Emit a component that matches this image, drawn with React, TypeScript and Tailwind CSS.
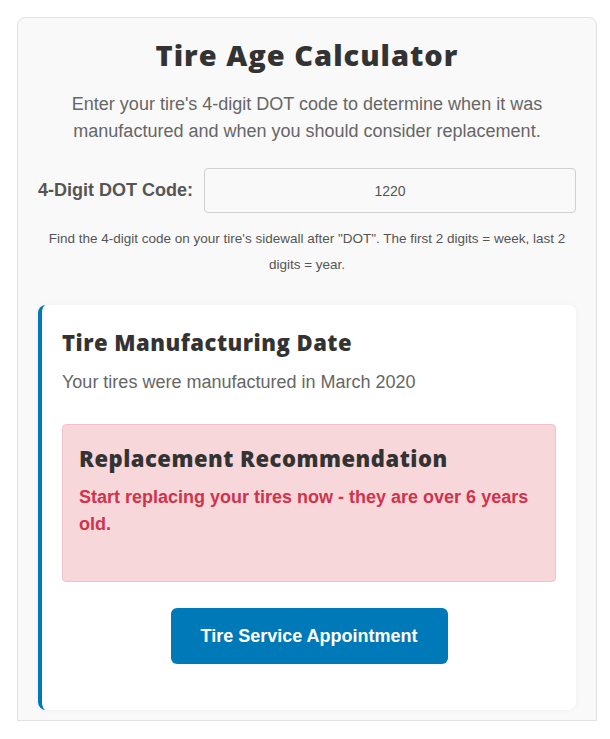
export default function App() {
  return (
    <div className="bg-white pt-[17px] pl-[17px] pr-[13px] font-['Liberation_Sans',Arial,sans-serif]">
      <div className="rounded-t-lg border border-[#e2e2e2] bg-[#f9f9f9] px-5 pt-5 pb-[10px]">
        <h1 className="text-center font-['Open_Sans',sans-serif] text-[29px] leading-[34px] font-extrabold tracking-[1px] text-[#333]">
          Tire Age Calculator
        </h1>
        <p className="mt-[19px] text-center text-[18px] leading-[27px] text-[#666]">
          Enter your tire's 4-digit DOT code to determine when it was
          manufactured and when you should consider replacement.
        </p>

        <div className="mt-[23px] flex items-center gap-[11px]">
          <label className="text-[18px] font-bold whitespace-nowrap text-[#555]">
            4-Digit DOT Code:
          </label>
          <input
            defaultValue="1220"
            className="h-[45px] flex-1 rounded border border-[#d0d0d0] bg-[#f9f9f9] text-center text-[14px] text-[#555] outline-none"
          />
        </div>

        <p className="mt-[13px] text-center text-[13.5px] leading-[26px] text-[#555]">
          Find the 4-digit code on your tire's sidewall after "DOT". The first 2
          digits = week, last 2 digits = year.
        </p>

        <div className="mt-[27px] rounded-lg border-l-4 border-[#0079b8] bg-white px-5 pt-[24px] pb-[46px] shadow-[0_0_6px_rgba(0,0,0,0.04)]">
          <h2 className="font-['Open_Sans',sans-serif] text-[22px] leading-[26px] font-extrabold tracking-[0.5px] text-[#333]">
            Tire Manufacturing Date
          </h2>
          <p className="mt-[14px] text-[18px] leading-[27px] text-[#666]">
            Your tires were manufactured in March 2020
          </p>

          <div className="mt-[28px] rounded border border-[#f1c3c8] bg-[#f8d7da] px-4 pt-5 pb-[43px]">
            <h3 className="font-['Open_Sans',sans-serif] text-[22px] leading-[26px] font-extrabold tracking-[0.5px] text-[#333]">
              Replacement Recommendation
            </h3>
            <p className="mt-[13px] text-[18px] leading-[27px] font-bold text-[#d0334d]">
              Start replacing your tires now - they are over 6 years old.
            </p>
          </div>

          <div className="mt-[26px] flex justify-center">
            <button className="h-[56px] w-[277px] rounded-md bg-[#0079b8] text-[18px] font-bold text-white">
              Tire Service Appointment
            </button>
          </div>
        </div>
      </div>
    </div>
  );
}
